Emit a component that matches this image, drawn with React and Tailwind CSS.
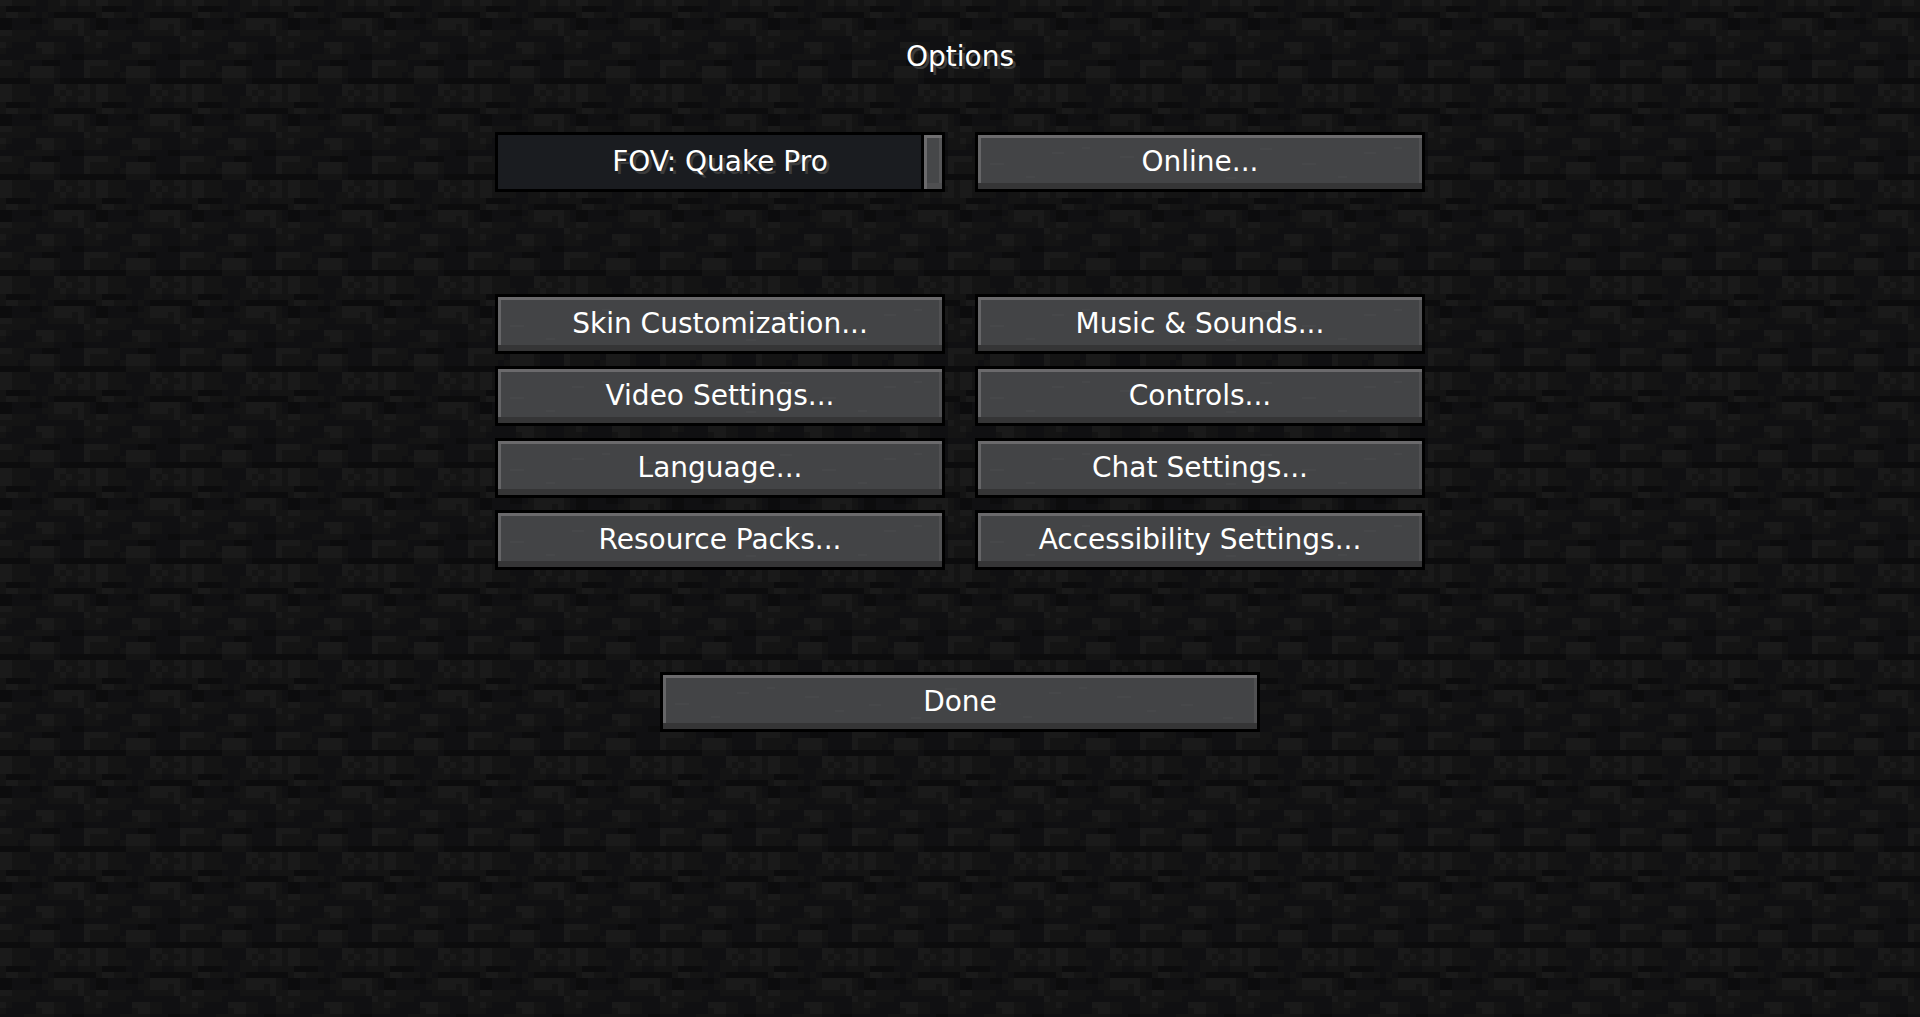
import * as React from 'react'
import { clsx } from 'clsx'

// 16x16 stone tile, one character per texel, looked up in SHADES
const TILE = [
  '4433332233433443',
  '3111122233322333',
  '3443332321111111',
  '1122211234444432',
  '1122222334443432',
  '4433332233333433',
  '3333322222222243',
  '4322224443322233',
  '3222223443322233',
  '2222333332221122',
  '4433222111222244',
  '3333244443222243',
  '3332344443222243',
  '1111133332111111',
  '4433322224433443',
  '4433322224343343',
]

const SHADES = ['#0a0a0b', '#0c0c0d', '#101012', '#141414', '#1a1a1a', '#1e1e1e']
const TEXEL = 6

// faint scratches on the button face: x, y, width
const SCRATCHES = [
  [12, 28, 14],
  [48, 41, 9],
  [74, 17, 12],
  [104, 12, 8],
  [142, 21, 14],
  [172, 35, 9],
  [206, 29, 12],
  [248, 42, 10],
  [282, 13, 12],
]

const OPTIONS = [
  'Skin Customization...',
  'Music & Sounds...',
  'Video Settings...',
  'Controls...',
  'Language...',
  'Chat Settings...',
  'Resource Packs...',
  'Accessibility Settings...',
]

function StoneBackground() {
  return (
    <svg aria-hidden="true" className="absolute inset-0 -z-10 h-full w-full" shapeRendering="crispEdges">
      <defs>
        <pattern id="stone" width="96" height="96" patternUnits="userSpaceOnUse">
          {TILE.map((row, y) =>
            [...row].map((shade, x) => (
              <rect
                key={`${x}-${y}`}
                x={x * TEXEL}
                y={y * TEXEL}
                width={TEXEL}
                height={TEXEL}
                fill={SHADES[Number(shade)]}
              />
            ))
          )}
        </pattern>
        <pattern id="scratches" width="312" height="54" patternUnits="userSpaceOnUse">
          {SCRATCHES.map(([x, y, width]) => (
            <rect key={x} x={x} y={y} width={width} height="2" fill="#47484a" />
          ))}
        </pattern>
      </defs>
      <rect width="100%" height="100%" fill="url(#stone)" />
    </svg>
  )
}

function MenuButton({ className, children }) {
  return (
    <button
      type="button"
      className={clsx(
        'relative isolate h-[60px] border-[3px] border-black bg-[#434446] hover:brightness-125',
        'shadow-[inset_0_3px_#6b6a6c,inset_0_-6px_#353536,inset_3px_0_#656567,inset_-3px_0_#505052]',
        className
      )}
    >
      <svg aria-hidden="true" className="absolute inset-0 -z-10 h-full w-full">
        <rect width="100%" height="100%" fill="url(#scratches)" />
      </svg>
      {children}
    </button>
  )
}

function FovSlider() {
  const [fov, setFov] = React.useState(110)
  const label = fov === 110 ? 'Quake Pro' : fov === 70 ? 'Normal' : fov

  return (
    <div className="grid h-[60px]">
      <input
        id="fov"
        type="range"
        min="30"
        max="110"
        value={fov}
        onChange={(e) => setFov(Number(e.target.value))}
        className={clsx(
          'col-start-1 row-start-1 h-[60px] w-full cursor-pointer appearance-none bg-[#1a1c20] shadow-[inset_0_0_0_3px_#000]',
          '[&::-webkit-slider-thumb]:h-[60px] [&::-webkit-slider-thumb]:w-6 [&::-webkit-slider-thumb]:appearance-none',
          '[&::-webkit-slider-thumb]:border-[3px] [&::-webkit-slider-thumb]:border-black [&::-webkit-slider-thumb]:bg-[#464749]',
          '[&::-webkit-slider-thumb]:shadow-[inset_0_3px_#6f6e70,inset_3px_0_#6b6a6c,inset_0_-6px_#4f4f51,inset_-3px_0_#565658]'
        )}
      />
      <label
        htmlFor="fov"
        className="pointer-events-none col-start-1 row-start-1 self-center justify-self-center"
      >
        FOV: {label}
      </label>
    </div>
  )
}

export default function App() {
  return (
    <main className="relative isolate flex min-h-screen flex-col items-center bg-[#101011] px-6 pt-[37px] font-['DejaVu_Sans',sans-serif] text-[28px] leading-10 text-white [text-shadow:3px_3px_#3c3c3c]">
      <StoneBackground />
      <h1>Options</h1>

      <div className="mt-[55px] grid w-full max-w-[930px] grid-cols-2 gap-x-[30px]">
        <FovSlider />
        <MenuButton>Online...</MenuButton>
      </div>

      <div className="mt-[102px] grid w-full max-w-[930px] grid-cols-2 gap-x-[30px] gap-y-3">
        {OPTIONS.map((option) => (
          <MenuButton key={option}>{option}</MenuButton>
        ))}
      </div>

      <MenuButton className="mt-[102px] w-full max-w-[600px]">Done</MenuButton>
    </main>
  )
}
